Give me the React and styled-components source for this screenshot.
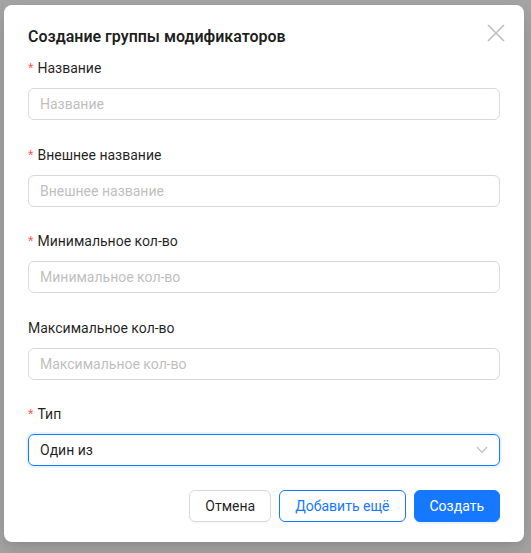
import React from 'react'
import styled, { createGlobalStyle } from 'styled-components'

const Global = createGlobalStyle`
  html, body {
    margin: 0;
    padding: 0;
    background: #a6a6a6;
    font-family: Roboto, 'Noto Sans', sans-serif;
  }
  * { box-sizing: border-box; }
`

const fields = [
  { label: 'Название', required: true },
  { label: 'Внешнее название', required: true },
  { label: 'Минимальное кол-во', required: true },
  { label: 'Максимальное кол-во', required: false },
]

export default function App() {
  return (
    <>
      <Global />
      <Page>
        <Modal>
          <Close aria-label="close">
            <svg width="18" height="18" viewBox="0 0 18 18">
              <path d="M1 1 L17 17 M17 1 L1 17" stroke="#bdbdbd" strokeWidth="1.6" fill="none" />
            </svg>
          </Close>
          <Title>Создание группы модификаторов</Title>

          {fields.map((f) => (
            <Item key={f.label}>
              <Label>
                {f.required && <Star>*</Star>}
                {f.label}
              </Label>
              <Input type="text" placeholder={f.label} />
            </Item>
          ))}

          <Item>
            <Label>
              <Star>*</Star>Тип
            </Label>
            <Select>
              <span>Один из</span>
              <svg width="12" height="8" viewBox="0 0 12 8">
                <path d="M1 1 L6 6.5 L11 1" stroke="#c4c4c4" strokeWidth="1.2" fill="none" />
              </svg>
            </Select>
          </Item>

          <Footer>
            <Button>Отмена</Button>
            <Button $variant="outline">Добавить ещё</Button>
            <Button $variant="primary">Создать</Button>
          </Footer>
        </Modal>
      </Page>
    </>
  )
}

const Page = styled.div`
  width: 531px;
  height: 553px;
  padding: 5px 0 0 4px;
`

const Modal = styled.div`
  position: relative;
  width: 520px;
  background: #fff;
  border-radius: 8px;
  padding: 20px 24px 20px;
  box-shadow: 0 6px 16px rgba(0, 0, 0, 0.08), 0 3px 6px -4px rgba(0, 0, 0, 0.12),
    0 9px 28px 8px rgba(0, 0, 0, 0.05);
`

const Close = styled.div`
  position: absolute;
  top: 18px;
  right: 18px;
  width: 20px;
  height: 20px;
  display: flex;
  align-items: center;
  justify-content: center;
`

const Title = styled.div`
  font-size: 16px;
  font-weight: 600;
  line-height: 24px;
  color: rgba(0, 0, 0, 0.88);
  margin-bottom: 8px;
`

const Item = styled.div`
  margin-bottom: 23.6px;
`

const Label = styled.div`
  font-size: 14px;
  line-height: 22px;
  color: rgba(0, 0, 0, 0.88);
  padding-bottom: 9px;
`

const Star = styled.span`
  color: #ff4d4f;
  margin-right: 4px;
  font-family: SimSun, sans-serif;
`

const Input = styled.input`
  display: block;
  width: 100%;
  height: 32px;
  padding: 4px 11px;
  font-family: inherit;
  font-size: 14px;
  border: 1px solid #d9d9d9;
  border-radius: 6px;
  outline: none;
  color: rgba(0, 0, 0, 0.88);
  &::placeholder {
    color: #bfbfbf;
  }
`

const Select = styled.div`
  height: 32px;
  padding: 0 11px;
  display: flex;
  align-items: center;
  justify-content: space-between;
  font-size: 14px;
  color: rgba(0, 0, 0, 0.88);
  border: 1px solid #1677ff;
  border-radius: 6px;
  box-shadow: 0 0 0 2px rgba(5, 145, 255, 0.1);
`

const Footer = styled.div`
  display: flex;
  justify-content: flex-end;
  gap: 8px;
`

const Button = styled.button`
  height: 32px;
  padding: 4px 15px;
  font-family: inherit;
  font-size: 14px;
  border-radius: 6px;
  cursor: pointer;
  border: 1px solid
    ${(p) => (p.$variant === 'outline' || p.$variant === 'primary' ? '#1677ff' : '#d9d9d9')};
  background: ${(p) => (p.$variant === 'primary' ? '#1677ff' : '#fff')};
  color: ${(p) =>
    p.$variant === 'primary' ? '#fff' : p.$variant === 'outline' ? '#1677ff' : 'rgba(0,0,0,0.88)'};
  box-shadow: ${(p) =>
    p.$variant === 'primary' ? '0 2px 0 rgba(5,145,255,0.1)' : '0 2px 0 rgba(0,0,0,0.02)'};
`
